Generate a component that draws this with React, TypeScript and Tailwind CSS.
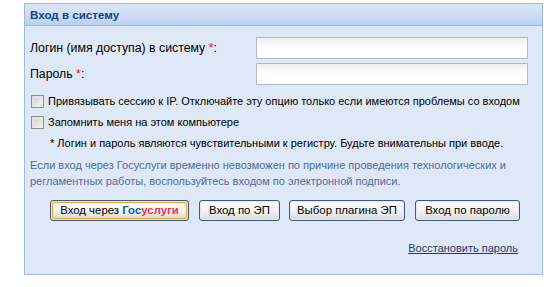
import React from "react";

const Btn = ({ children, focus, w }: { children: React.ReactNode; focus?: boolean; w: string }) => (
  <div className={"rounded-[3px] border border-[#3d5a80] p-px h-[21px] flex shrink-0 " + w}>
    <div
      className={
        "flex-1 flex items-center justify-center whitespace-nowrap rounded-[2px] bg-gradient-to-b from-[#ffffff] via-[#f3f3f3] to-[#dcdcdc] text-black text-[11.4px] " +
        (focus ? "border border-[#f5a623] " : "")
      }
    >
      {children}
    </div>
  </div>
);

const Checkbox = () => (
  <div className="w-[13px] h-[13px] shrink-0 border border-[#8f8f8f] bg-gradient-to-br from-[#dcdcdc] to-[#f5f5f5] p-px">
    <div className="w-full h-full border border-[#e8e8e8] bg-gradient-to-br from-[#d4d4d4] to-[#f0f0f0]" />
  </div>
);

const Input = () => (
  <div className="w-[272px] h-[22px] shrink-0 border border-[#b5b8c8] bg-gradient-to-b from-[#eeeeee] via-white to-white" />
);

export default function App() {
  return (
    <div className="w-[559px] h-[287px] bg-white pt-[3px] pl-[24px]" style={{ fontFamily: '"Liberation Sans", Arial, sans-serif' }}>
      <div className="w-[519px] h-[272px] border border-[#99bbe8] bg-[#dfe8f6] flex flex-col">
        <div className="h-[22px] shrink-0 border-b border-[#99bbe8] bg-gradient-to-b from-[#dae6f4] via-[#cddef3] to-[#b8d0ee] flex items-center pl-[5px] text-[11.6px] font-bold text-[#15428b]">
          Вход в систему
        </div>
        <div className="flex flex-col pl-[5px] pt-[11px] text-[11px] text-black whitespace-nowrap">
          <div className="flex items-center justify-between pr-[14px]">
            <span className="text-[12.3px]">
              Логин (имя доступа) в систему <span className="text-[#ff0000]">*</span>:
            </span>
            <Input />
          </div>
          <div className="flex items-center justify-between pr-[14px] mt-[4px]">
            <span className="text-[12.3px]">
              Пароль <span className="text-[#ff0000]">*</span>:
            </span>
            <Input />
          </div>
          <div className="flex items-center gap-[4px] mt-[6px] h-[21px] pl-px">
            <Checkbox />
            <span>Привязывать сессию к IP. Отключайте эту опцию только если имеются проблемы со входом</span>
          </div>
          <div className="flex items-center gap-[4px] h-[21px] pl-px">
            <Checkbox />
            <span>Запомнить меня на этом компьютере</span>
          </div>
          <div className="h-[21px] pl-[20px] flex items-center">
            * Логин и пароль являются чувствительными к регистру. Будьте внимательны при вводе.
          </div>
          <div className="mt-[3px] text-[#4f6a99] leading-[16px]">
            Если вход через Госуслуги временно невозможен по причине проведения технологических и
            <br />
            регламентных работы, воспользуйтесь входом по электронной подписи.
          </div>
          <div className="flex mt-[11px] pl-[20px]">
            <Btn focus w="w-[139px]">
              Вход через&nbsp;<span className="font-bold text-[#0d5fa5]">Гос</span>
              <span className="font-bold text-[#ee2f53]">услуги</span>
            </Btn>
            <div className="w-[10px] shrink-0" />
            <Btn w="w-[81px]">Вход по ЭП</Btn>
            <div className="w-[9px] shrink-0" />
            <Btn w="w-[116px]">Выбор плагина ЭП</Btn>
            <div className="w-[10px] shrink-0" />
            <Btn w="w-[105px]">Вход по паролю</Btn>
          </div>
          <div className="flex justify-end pr-[24px] mt-[19px] leading-[16px]">
            <span className="underline text-[#1f3c6e] text-[11px]">Восстановить пароль</span>
          </div>
        </div>
      </div>
    </div>
  );
}
